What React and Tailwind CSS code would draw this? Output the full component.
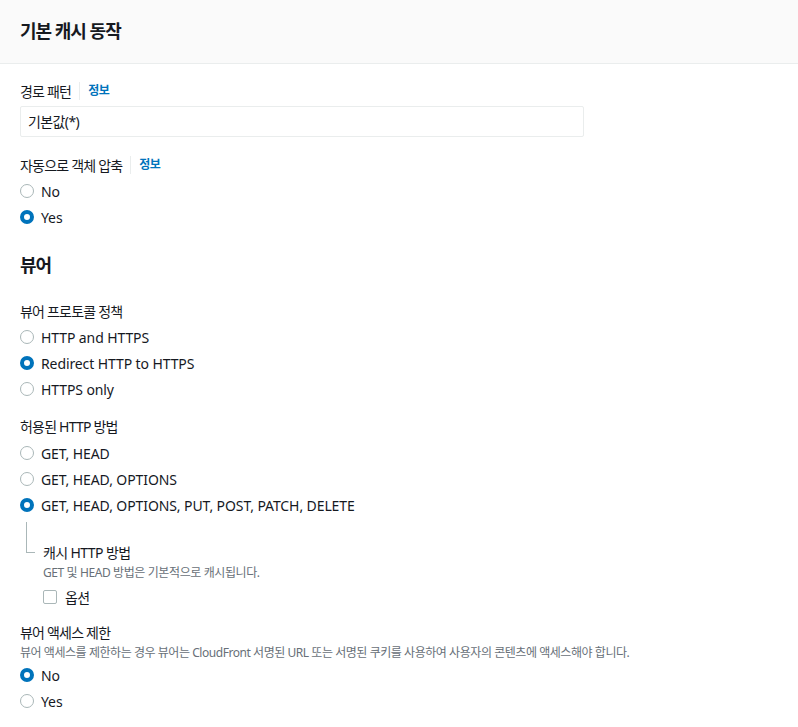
import React, { useState } from 'react';

// ─── Small form bits ─────────────────────────────────────────────────────────
function Radio({ checked, label, onClick }) {
  return (
    <label onClick={onClick} className="flex items-center gap-[7px] h-[26px] cursor-pointer">
      <span
        className={`h-[14px] w-[14px] shrink-0 rounded-full ${
          checked ? 'border-[4px] border-[#0073bb] bg-white' : 'border border-[#aab7b8] bg-white'
        }`}
      />
      <span className="text-[14px] text-[#16191f] tracking-[-0.1px]">{label}</span>
    </label>
  );
}

function RadioGroup({ options, value, onChange }) {
  return (
    <div className="flex flex-col">
      {options.map((o) => (
        <Radio key={o} label={o} checked={value === o} onClick={() => onChange(o)} />
      ))}
    </div>
  );
}

function Label({ children, info }) {
  return (
    <div className="flex items-center h-[22px] text-[14px] text-[#16191f]">
      <span className="tracking-[-0.8px]">{children}</span>
      {info && (
        <>
          <span className="mx-[8px] h-[18px] w-px bg-[#eaeded]" />
          <span className="text-[12px] font-bold text-[#0073bb] tracking-[-0.5px]">정보</span>
        </>
      )}
    </div>
  );
}

export default function App() {
  const [compress, setCompress] = useState('Yes');
  const [protocol, setProtocol] = useState('Redirect HTTP to HTTPS');
  const [methods, setMethods] = useState('GET, HEAD, OPTIONS, PUT, POST, PATCH, DELETE');
  const [restrict, setRestrict] = useState('No');
  const [opt, setOpt] = useState(false);

  return (
    <div
      className="w-[798px] min-h-[727px] bg-white text-[#16191f]"
      style={{ fontFamily: '"Noto Sans", "Noto Sans CJK KR", sans-serif' }}
    >
      {/* Header */}
      <div className="h-[64px] flex items-center px-[20px] bg-[#fafafa] border-b border-[#eaeded]">
        <h2 className="text-[18px] font-bold tracking-[-1px]">기본 캐시 동작</h2>
      </div>

      <div className="px-[20px] pt-[16px]">
        <Label info>경로 패턴</Label>
        <div className="mt-[4px] h-[31px] w-[564px] border border-[#eaeded] rounded-[2px] flex items-center px-[7px] text-[14px] tracking-[-0.6px]">
          기본값(*)
        </div>

        <div className="mt-[17px]">
          <Label info>자동으로 객체 압축</Label>
          <div className="mt-[2px]">
            <RadioGroup options={['No', 'Yes']} value={compress} onChange={setCompress} />
          </div>
        </div>

        <h3 className="mt-[22px] text-[18px] font-bold leading-[26px] tracking-[-1px]">뷰어</h3>

        <div className="mt-[22px]">
          <Label>뷰어 프로토콜 정책</Label>
          <div className="mt-[2px]">
            <RadioGroup
              options={['HTTP and HTTPS', 'Redirect HTTP to HTTPS', 'HTTPS only']}
              value={protocol}
              onChange={setProtocol}
            />
          </div>
        </div>

        <div className="mt-[13px]">
          <Label>허용된 HTTP 방법</Label>
          <div className="mt-[3px]">
            <RadioGroup
              options={['GET, HEAD', 'GET, HEAD, OPTIONS', 'GET, HEAD, OPTIONS, PUT, POST, PATCH, DELETE']}
              value={methods}
              onChange={setMethods}
            />
          </div>

          {/* Nested cache methods */}
          <div className="flex">
            <div className="w-[23px] shrink-0 pl-[6px] pt-[4px]">
              <div className="h-[31px] w-[9px] border-l border-b border-[#aab7b8]" />
            </div>
            <div className="pt-[24px]">
              <div className="text-[14px] leading-[22px] tracking-[-0.6px]">캐시 HTTP 방법</div>
              <div className="text-[12px] text-[#687078] leading-[18px] tracking-[-0.4px]">
                GET 및 HEAD 방법은 기본적으로 캐시됩니다.
              </div>
              <label onClick={() => setOpt(!opt)} className="mt-[2px] flex items-center gap-[8px] h-[26px] cursor-pointer">
                <span
                  className={`h-[14px] w-[14px] rounded-[2px] border ${
                    opt ? 'bg-[#0073bb] border-[#0073bb]' : 'border-[#aab7b8] bg-white'
                  }`}
                />
                <span className="text-[14px] tracking-[-0.6px]">옵션</span>
              </label>
            </div>
          </div>
        </div>

        <div className="mt-[11px]">
          <Label>뷰어 액세스 제한</Label>
          <div className="mt-[2px] text-[12px] text-[#687078] leading-[16px] tracking-[-0.45px]">
            뷰어 액세스를 제한하는 경우 뷰어는 CloudFront 서명된 URL 또는 서명된 쿠키를 사용하여 사용자의 콘텐츠에 액세스해야 합니다.
          </div>
          <div className="mt-[1px]">
            <RadioGroup options={['No', 'Yes']} value={restrict} onChange={setRestrict} />
          </div>
        </div>
      </div>
    </div>
  );
}
